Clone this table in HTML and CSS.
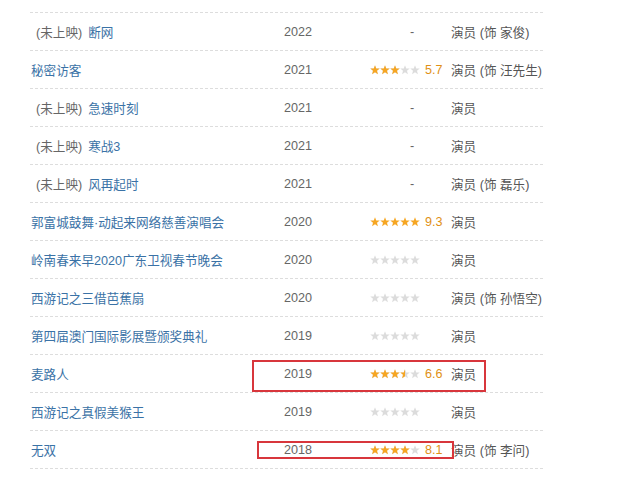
FILE: index.html
```html
<!DOCTYPE html>
<html>

<head>
    <meta charset="utf-8">
    <title>作品列表</title>
    <link rel="stylesheet" href="styles.css">
</head>

<body>
    <svg class="defs" width="0" height="0">
        <defs>
            <path id="star" d="M5 0.3 L6.25 3.4 L9.7 3.5 L7 5.7 L7.9 9.2 L5 7.2 L2.1 9.2 L3 5.7 L0.3 3.5 L3.75 3.4Z"></path>
            <g id="stars5">
                <use href="#star" x="0"></use>
                <use href="#star" x="10"></use>
                <use href="#star" x="20"></use>
                <use href="#star" x="30"></use>
                <use href="#star" x="40"></use>
            </g>
        </defs>
    </svg>

    <div class="list">
        <div class="row">
            <div class="col-title"><span class="tag">(未上映)</span><a class="link">断网</a></div>
            <div class="col-year">2022</div>
            <div class="col-rate"><span class="none">-</span></div>
            <div class="col-role">演员 (饰 家俊)</div>
        </div>
        <div class="row">
            <div class="col-title"><a class="link">秘密访客</a></div>
            <div class="col-year">2021</div>
            <div class="col-rate">
                <svg class="stars" width="50" height="10" viewBox="0 0 50 10">
                    <clipPath id="c1"><rect width="30" height="10"></rect></clipPath>
                    <use href="#stars5" class="off"></use>
                    <use href="#stars5" class="on" clip-path="url(#c1)"></use>
                </svg>
                <span class="score">5.7</span>
            </div>
            <div class="col-role">演员 (饰 汪先生)</div>
        </div>
        <div class="row">
            <div class="col-title"><span class="tag">(未上映)</span><a class="link">急速时刻</a></div>
            <div class="col-year">2021</div>
            <div class="col-rate"><span class="none">-</span></div>
            <div class="col-role">演员</div>
        </div>
        <div class="row">
            <div class="col-title"><span class="tag">(未上映)</span><a class="link">寒战3</a></div>
            <div class="col-year">2021</div>
            <div class="col-rate"><span class="none">-</span></div>
            <div class="col-role">演员</div>
        </div>
        <div class="row">
            <div class="col-title"><span class="tag">(未上映)</span><a class="link">风再起时</a></div>
            <div class="col-year">2021</div>
            <div class="col-rate"><span class="none">-</span></div>
            <div class="col-role">演员 (饰 磊乐)</div>
        </div>
        <div class="row">
            <div class="col-title"><a class="link">郭富城鼓舞·动起来网络慈善演唱会</a></div>
            <div class="col-year">2020</div>
            <div class="col-rate">
                <svg class="stars" width="50" height="10" viewBox="0 0 50 10">
                    <use href="#stars5" class="on"></use>
                </svg>
                <span class="score">9.3</span>
            </div>
            <div class="col-role">演员</div>
        </div>
        <div class="row">
            <div class="col-title"><a class="link">岭南春来早2020广东卫视春节晚会</a></div>
            <div class="col-year">2020</div>
            <div class="col-rate">
                <svg class="stars" width="50" height="10" viewBox="0 0 50 10">
                    <use href="#stars5" class="off"></use>
                </svg>
            </div>
            <div class="col-role">演员</div>
        </div>
        <div class="row">
            <div class="col-title"><a class="link">西游记之三借芭蕉扇</a></div>
            <div class="col-year">2020</div>
            <div class="col-rate">
                <svg class="stars" width="50" height="10" viewBox="0 0 50 10">
                    <use href="#stars5" class="off"></use>
                </svg>
            </div>
            <div class="col-role">演员 (饰 孙悟空)</div>
        </div>
        <div class="row">
            <div class="col-title"><a class="link">第四届澳门国际影展暨颁奖典礼</a></div>
            <div class="col-year">2019</div>
            <div class="col-rate">
                <svg class="stars" width="50" height="10" viewBox="0 0 50 10">
                    <use href="#stars5" class="off"></use>
                </svg>
            </div>
            <div class="col-role">演员</div>
        </div>
        <div class="row">
            <div class="col-title"><a class="link">麦路人</a></div>
            <div class="col-year">2019</div>
            <div class="col-rate">
                <svg class="stars" width="50" height="10" viewBox="0 0 50 10">
                    <clipPath id="c2"><rect width="35" height="10"></rect></clipPath>
                    <use href="#stars5" class="off"></use>
                    <use href="#stars5" class="on" clip-path="url(#c2)"></use>
                </svg>
                <span class="score">6.6</span>
            </div>
            <div class="col-role">演员</div>
            <div class="mark mark-wide"></div>
        </div>
        <div class="row">
            <div class="col-title"><a class="link">西游记之真假美猴王</a></div>
            <div class="col-year">2019</div>
            <div class="col-rate">
                <svg class="stars" width="50" height="10" viewBox="0 0 50 10">
                    <use href="#stars5" class="off"></use>
                </svg>
            </div>
            <div class="col-role">演员</div>
        </div>
        <div class="row">
            <div class="col-title"><a class="link">无双</a></div>
            <div class="col-year">2018</div>
            <div class="col-rate">
                <svg class="stars" width="50" height="10" viewBox="0 0 50 10">
                    <clipPath id="c3"><rect width="40" height="10"></rect></clipPath>
                    <use href="#stars5" class="off"></use>
                    <use href="#stars5" class="on" clip-path="url(#c3)"></use>
                </svg>
                <span class="score">8.1</span>
            </div>
            <div class="col-role">演员 (饰 李问)</div>
            <div class="mark mark-thin"></div>
        </div>
        <div class="row">
            <div class="col-title"></div>
            <div class="col-year"></div>
            <div class="col-rate">
                <svg class="stars" width="50" height="10" viewBox="0 0 50 10">
                    <clipPath id="c4"><rect width="40" height="10"></rect></clipPath>
                    <use href="#stars5" class="off"></use>
                    <use href="#stars5" class="on" clip-path="url(#c4)"></use>
                </svg>
            </div>
            <div class="col-role"></div>
        </div>
    </div>
</body>

</html>
```

FILE: styles.css
```css
body {
    margin: 0;
    background-color: #ffffff;
    font-family: "Liberation Sans", "Noto Sans CJK SC", sans-serif;
    font-size: 12.6px;
    color: #555555;
}

.defs {
    position: absolute;
    width: 0;
    height: 0;
}

.list {
    margin-top: 12px;
    margin-left: 30px;
    width: 513px;
    height: 470px;
    overflow: hidden;
}

.row {
    position: relative;
    display: flex;
    align-items: center;
    height: 37px;
    border-top: 1px dashed #dddddd;
}

.row > div {
    flex: none;
}

.col-title {
    width: 253px;
    padding-left: 1px;
    white-space: nowrap;
}

.tag {
    color: #666666;
    padding-left: 5px;
    margin-right: 6px;
}

.link {
    color: #3a72a6;
    text-decoration: none;
}

.col-year {
    width: 86px;
    color: #666666;
}

.col-rate {
    width: 81px;
    display: flex;
    align-items: center;
}

.none {
    padding-left: 40px;
    color: #666666;
}

.stars {
    display: block;
}

.stars .off {
    fill: #dcdcdc;
}

.stars .on {
    fill: #f6a623;
}

.score {
    margin-left: 5px;
    color: #e09015;
}

.col-role {
    white-space: nowrap;
}

.mark {
    position: absolute;
    border: 2px solid #d8363c;
    box-sizing: border-box;
}

.mark-wide {
    left: 222px;
    top: 5px;
    width: 234px;
    height: 32px;
}

.mark-thin {
    left: 227px;
    top: 10px;
    width: 197px;
    height: 18px;
}
```
